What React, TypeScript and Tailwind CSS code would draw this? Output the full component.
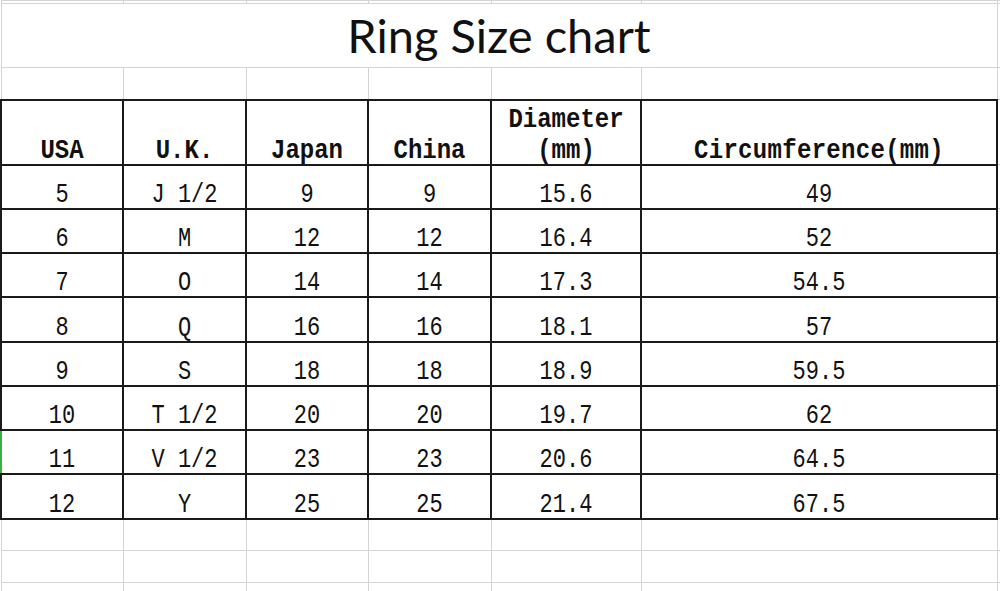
import React from 'react';

const rows: [string, string, string, string, string, string][] = [
  ['5', 'J 1/2', '9', '9', '15.6', '49'],
  ['6', 'M', '12', '12', '16.4', '52'],
  ['7', 'O', '14', '14', '17.3', '54.5'],
  ['8', 'Q', '16', '16', '18.1', '57'],
  ['9', 'S', '18', '18', '18.9', '59.5'],
  ['10', 'T 1/2', '20', '20', '19.7', '62'],
  ['11', 'V 1/2', '23', '23', '20.6', '64.5'],
  ['12', 'Y', '25', '25', '21.4', '67.5'],
];

const gray = 'border border-[#d4d4d4]';
const black = 'border-2 border-[#1a1a1a]';
const mono = { fontFamily: '"Liberation Mono", "DejaVu Sans Mono", monospace' };
const head = black + ' text-center align-bottom p-0 text-[24px] font-bold text-[#111] leading-[27px]';
const headSpan = 'inline-block scale-y-[1.15] origin-bottom translate-y-[2px]';

function BlankRow({ h }: { h: string }) {
  return (
    <tr className={h}>
      {Array.from({ length: 7 }).map((_, i) => (
        <td key={i} className={gray} />
      ))}
    </tr>
  );
}

export default function App() {
  return (
    <div className="w-[1000px] h-[591px] overflow-hidden bg-white">
      <table className="table-fixed border-collapse w-[1003px]">
        <colgroup>
          <col className="w-[122px]" />
          <col className="w-[123px]" />
          <col className="w-[122px]" />
          <col className="w-[123px]" />
          <col className="w-[150px]" />
          <col className="w-[356px]" />
          <col className="w-[7px]" />
        </colgroup>
        <tbody>
          <BlankRow h="h-[3px]" />
          {/* Title row, merged over the six columns */}
          <tr className="h-[64px]">
            <td colSpan={6} className={gray + ' text-center align-middle'}>
              <span className="text-[47px] text-[#111] leading-none" style={{ fontFamily: 'Lato, "Open Sans", sans-serif' }}>
                Ring Size chart
              </span>
            </td>
            <td className={gray} />
          </tr>
          <BlankRow h="h-[32px]" />
          {/* Header */}
          <tr className="h-[65px]" style={mono}>
            {['USA', 'U.K.', 'Japan', 'China'].map((t) => (
              <td key={t} className={head}>
                <span className={headSpan}>{t}</span>
              </td>
            ))}
            <td className={head}>
              <span className={headSpan}>
                Diameter
                <br />
                (mm)
              </span>
            </td>
            <td className={head + ' tracking-[0.3px]'}>
              <span className={headSpan}>Circumference(mm)</span>
            </td>
            <td className={gray} />
          </tr>
          {rows.map((r, i) => (
            <tr key={i} className="h-[44.25px]" style={mono}>
              {r.map((c, j) => (
                <td
                  key={j}
                  className={
                    black +
                    ' text-center align-bottom p-0 text-[22px] text-[#111] leading-[24px]' +
                    (i === 6 && j === 0 ? ' border-l-[#3cb043]' : '')
                  }
                >
                  <span className="inline-block scale-y-[1.28] origin-bottom translate-y-[3px]">{c}</span>
                </td>
              ))}
              <td className={gray} />
            </tr>
          ))}
          <BlankRow h="h-[32px]" />
          <BlankRow h="h-[32px]" />
          <BlankRow h="h-[32px]" />
        </tbody>
      </table>
    </div>
  );
}
